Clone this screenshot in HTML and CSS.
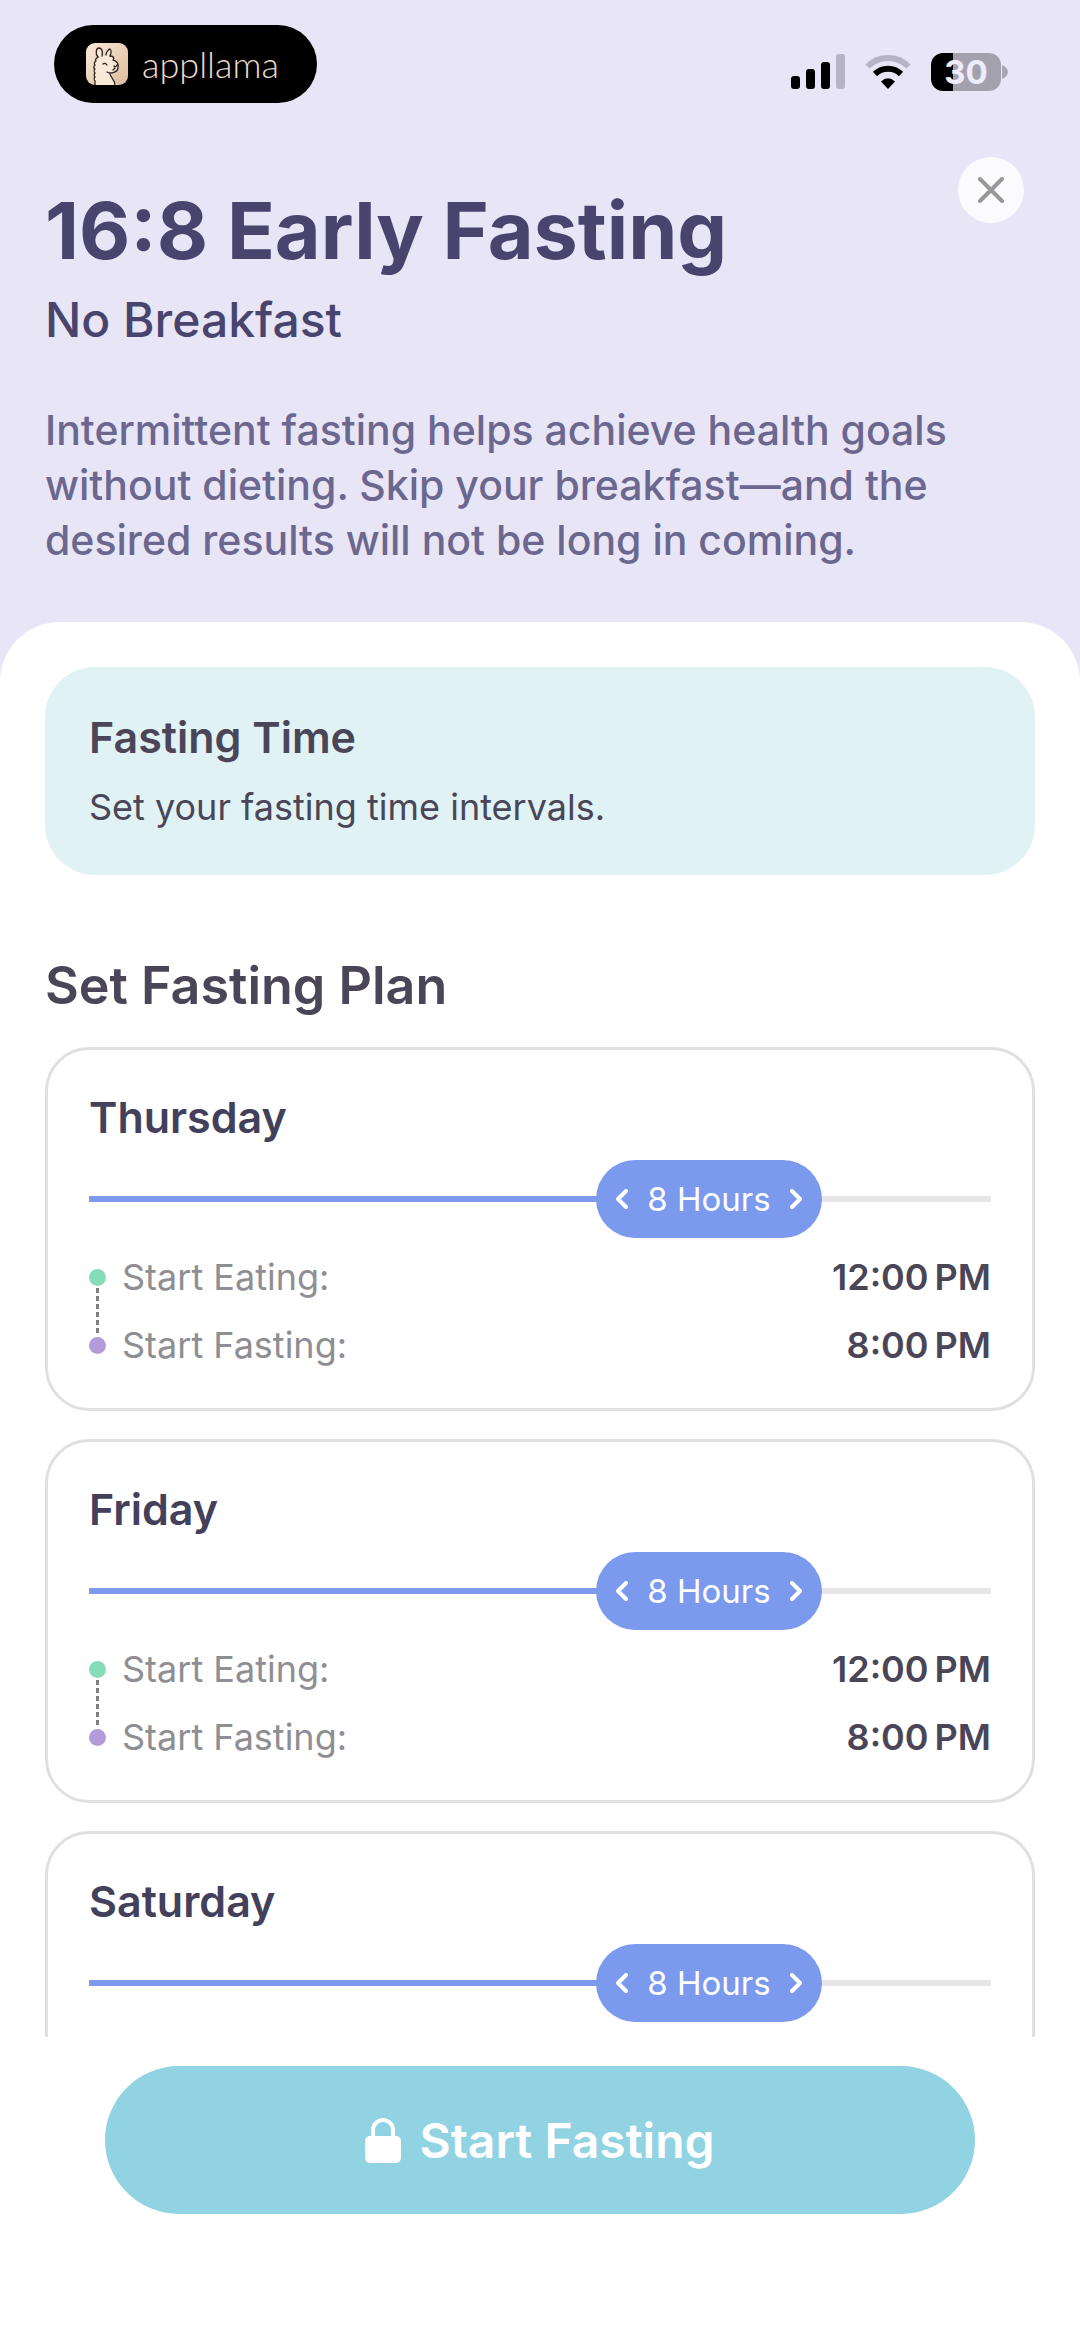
FILE: index.html
```html
<!DOCTYPE html>
<html lang="en">
<head>
    <meta charset="UTF-8">
    <meta name="viewport" content="width=device-width, initial-scale=1.0">
    <title>16:8 Early Fasting</title>
    <link rel="stylesheet" href="styles.css">
</head>
<body>
    <div class="status-bar">
        <div class="brand">
            <svg class="brand-icon" viewBox="0 0 42 42" aria-hidden="true">
                <defs>
                    <linearGradient id="brand-bg" x1="0" y1="0" x2="1" y2="1">
                        <stop offset="0" stop-color="#fbe9d8"/>
                        <stop offset="1" stop-color="#dcbb9b"/>
                    </linearGradient>
                </defs>
                <rect width="42" height="42" rx="9" fill="url(#brand-bg)"/>
                <path d="M9 42V22c0-3 2-6 4-8-3-3-3-9 0-9s4 4 3 8l4-1c0-4 3-7 5-6s1 5 0 7c3 0 4 2 3 4 3 1 5 4 4 8s-3 6-7 5l2 5 4 7z" fill="#f9ead8"/>
                <g fill="none" stroke="#2a221c" stroke-width="1.3" stroke-linecap="round" stroke-linejoin="round">
                    <path d="M12 14c-3-3-2-9 1-9s4 4 3 8M20 12c0-3 3-6 4-6 2 1 1 5 0 7"/>
                    <path d="M12 14c-2 1-3 3-2 4-2 1-2 3-1 4-1 1-2 3 0 4-1 1-1 3 0 4-1 1-1 3 0 4-1 1-1 3 0 4v4"/>
                    <path d="M24 13c3 0 5 2 3 4 4 1 6 4 5 8-1 5-8 6-11 4M28 23c1 1 2 1 3-1M29 25l-2 2M17 21c1-1 3-1 4 1"/>
                    <path d="M24 31c1 4 5 6 5 11"/>
                </g>
            </svg>
            <span class="brand-name">appllama</span>
        </div>
        <div class="status-icons">
            <svg width="54" height="36" viewBox="0 0 54 36" role="img" aria-label="Signal">
                <rect x="0" y="22" width="9" height="13" rx="3"/>
                <rect x="15" y="15" width="9" height="20" rx="3"/>
                <rect x="30" y="8" width="9" height="27" rx="3"/>
                <rect x="45" y="0" width="9" height="35" rx="3" fill="#b6b4c3"/>
            </svg>
            <svg width="46" height="36" viewBox="0 0 46 36" role="img" aria-label="Wi-Fi">
                <path d="M2.5 12.500a29 29 0 0 1 41 0" fill="none" stroke="#b6b4c3" stroke-width="6"/>
                <path d="M10 20a18.500 18.500 0 0 1 26 0" fill="none" stroke="#000" stroke-width="6"/>
                <path d="M23 35l-7-7.500q7-6.500 14 0z"/>
            </svg>
            <div class="battery">
                <span class="battery-level">30</span>
                <svg width="6" height="14" viewBox="0 0 6 14" aria-hidden="true">
                    <path d="M0 0q6 3 6 7t-6 7z" fill="#aaa7b5"/>
                </svg>
            </div>
        </div>
    </div>

    <header class="plan-header">
        <div class="title-row">
            <h1>16:8 Early Fasting</h1>
            <button class="close-btn" type="button" aria-label="Close">
                <svg width="26" height="26" viewBox="0 0 26 26" aria-hidden="true">
                    <path d="M2 2l22 22M24 2L2 24" stroke="#989898" stroke-width="4" stroke-linecap="round"/>
                </svg>
            </button>
        </div>
        <p class="subtitle">No Breakfast</p>
        <p class="description">Intermittent fasting helps achieve health goals without dieting. Skip your breakfast—and the desired results will not be long in coming.</p>
    </header>

    <main class="panel">
        <section class="info-card">
            <h3>Fasting Time</h3>
            <p>Set your fasting time intervals.</p>
        </section>

        <h2>Set Fasting Plan</h2>

        <div class="day-list">
            <section class="day-card">
                <h3>Thursday</h3>
                <div class="slider">
                    <input type="range" id="hours-thu" min="2" max="10" value="8" aria-label="Thursday eating hours">
                    <label class="slider-label" for="hours-thu">
                        <svg width="12" height="20" viewBox="0 0 12 20" aria-hidden="true"><path d="M10 2L2 10l8 8"/></svg>
                        8 Hours
                        <svg width="12" height="20" viewBox="0 0 12 20" aria-hidden="true"><path d="M2 2l8 8-8 8"/></svg>
                    </label>
                </div>
                <dl class="times">
                    <div class="time-row eating"><dt>Start Eating:</dt><dd>12:00&#8239;PM</dd></div>
                    <div class="time-row fasting"><dt>Start Fasting:</dt><dd>8:00&#8239;PM</dd></div>
                </dl>
            </section>

            <section class="day-card">
                <h3>Friday</h3>
                <div class="slider">
                    <input type="range" id="hours-fri" min="2" max="10" value="8" aria-label="Friday eating hours">
                    <label class="slider-label" for="hours-fri">
                        <svg width="12" height="20" viewBox="0 0 12 20" aria-hidden="true"><path d="M10 2L2 10l8 8"/></svg>
                        8 Hours
                        <svg width="12" height="20" viewBox="0 0 12 20" aria-hidden="true"><path d="M2 2l8 8-8 8"/></svg>
                    </label>
                </div>
                <dl class="times">
                    <div class="time-row eating"><dt>Start Eating:</dt><dd>12:00&#8239;PM</dd></div>
                    <div class="time-row fasting"><dt>Start Fasting:</dt><dd>8:00&#8239;PM</dd></div>
                </dl>
            </section>

            <section class="day-card">
                <h3>Saturday</h3>
                <div class="slider">
                    <input type="range" id="hours-sat" min="2" max="10" value="8" aria-label="Saturday eating hours">
                    <label class="slider-label" for="hours-sat">
                        <svg width="12" height="20" viewBox="0 0 12 20" aria-hidden="true"><path d="M10 2L2 10l8 8"/></svg>
                        8 Hours
                        <svg width="12" height="20" viewBox="0 0 12 20" aria-hidden="true"><path d="M2 2l8 8-8 8"/></svg>
                    </label>
                </div>
            </section>
        </div>
    </main>

    <footer class="action-bar">
        <button class="start-btn" type="button">
            <svg width="36" height="46" viewBox="0 0 36 46" aria-hidden="true">
                <path d="M8 22V13a10 10 0 0 1 20 0v9" fill="none" stroke="#fff" stroke-width="4"/>
                <rect x="0" y="19" width="36" height="27" rx="5" fill="#fff"/>
            </svg>
            Start Fasting
        </button>
    </footer>
</body>
</html>
```

FILE: styles.css
```css
* {
    margin: 0;
    padding: 0;
    box-sizing: border-box;
}

body {
    font-family: Inter, "Liberation Sans", sans-serif;
    background: #e8e6f6;
    color: #4a4658;
    height: 100vh;
    display: flex;
    flex-direction: column;
}

button {
    font: inherit;
    border: none;
    cursor: pointer;
}

/* Status bar */
.status-bar {
    display: flex;
    justify-content: space-between;
    align-items: flex-start;
    padding: 25px 72px 0 54px;
}

.brand {
    display: flex;
    align-items: center;
    gap: 14px;
    height: 78px;
    padding: 0 38px 0 32px;
    border-radius: 39px;
    background: #000;
}

.brand-icon {
    width: 42px;
    height: 42px;
}

.brand-name {
    font-family: Lato, sans-serif;
    font-size: 36px;
    font-weight: 300;
    line-height: 40px;
    color: #ecd9c8;
}

.status-icons {
    display: flex;
    align-items: center;
    gap: 20px;
    padding-top: 28px;
}

.battery {
    display: flex;
    align-items: center;
    gap: 1px;
}

.battery-level {
    width: 70px;
    height: 38px;
    border-radius: 12px;
    background: linear-gradient(90deg, #000 31%, #a4a1af 31%);
    color: #eeecfa;
    font-size: 33px;
    font-weight: 700;
    line-height: 38px;
    text-align: center;
}

/* Header */
.plan-header {
    padding: 54px 45px;
    color: #49446d;
}

.title-row {
    display: flex;
    justify-content: space-between;
    align-items: flex-start;
    padding-right: 11px;
}

h1 {
    padding-top: 25px;
    font-size: 79px;
    font-weight: 700;
    line-height: 96px;
}

.close-btn {
    display: flex;
    justify-content: center;
    align-items: center;
    flex: none;
    width: 66px;
    height: 66px;
    border-radius: 50%;
    background: #fbfafe;
}

.subtitle {
    margin-top: 13px;
    font-size: 48px;
    font-weight: 500;
    line-height: 58px;
}

.description {
    max-width: 940px;
    margin-top: 54px;
    font-size: 41px;
    font-weight: 500;
    line-height: 55px;
    color: #6b678e;
}

/* White sheet, scrolls under the action bar */
.panel {
    flex: 1;
    min-height: 0;
    overflow-y: auto;
    scrollbar-width: none;
    padding: 45px 45px 0;
    border-radius: 60px 60px 0 0;
    background: #fff;
}

.info-card {
    padding: 44px;
    border-radius: 50px;
    background: #e0f2f4;
}

.info-card p {
    margin-top: 20px;
    font-size: 36px;
    line-height: 48px;
}

h2 {
    margin: 79px 0 29px;
    font-size: 52px;
    font-weight: 600;
    line-height: 64px;
}

h3 {
    font-size: 43px;
    font-weight: 600;
    line-height: 52px;
}

.day-list {
    display: grid;
    grid-auto-rows: 1fr;
    gap: 28px;
}

.day-card {
    padding: 41px;
    border: 3px solid #dfe1e1;
    border-radius: 44px;
}

.day-card h3 {
    color: #42405a;
}

.slider {
    position: relative;
    height: 78px;
    margin: 17px 0;
}

.slider input {
    display: block;
    width: 100%;
    height: 78px;
    appearance: none;
    background: linear-gradient(90deg, #7c9bee 75%, #e6e6e6 75%) center / 100% 6px no-repeat;
}

.slider input::-webkit-slider-thumb {
    appearance: none;
    width: 226px;
    height: 78px;
    border-radius: 39px;
    background: #7b9aee;
}

/* Sits on the thumb */
.slider-label {
    position: absolute;
    top: 0;
    left: calc((100% - 226px) * 0.75);
    display: flex;
    justify-content: space-between;
    align-items: center;
    width: 226px;
    height: 78px;
    padding: 0 20px;
    color: #fff;
    font-size: 33px;
    pointer-events: none;
}

.slider-label path {
    fill: none;
    stroke: #fff;
    stroke-width: 4;
    stroke-linecap: round;
    stroke-linejoin: round;
}

.times {
    display: grid;
    gap: 24px;
    font-size: 36px;
    line-height: 44px;
}

.time-row {
    position: relative;
    display: flex;
    align-items: center;
}

.time-row::before {
    content: "";
    width: 17px;
    height: 17px;
    margin-right: 16px;
    border-radius: 50%;
}

.eating::before {
    background: #86dbb9;
}

.fasting::before {
    background: #b49bd9;
}

/* Dashed connector between the two dots */
.eating::after {
    content: "";
    position: absolute;
    top: 33px;
    left: 7px;
    width: 3px;
    height: 46px;
    background: repeating-linear-gradient(#808084 0 5px, transparent 5px 8px);
}

dt {
    color: #8e8e93;
}

dd {
    margin-left: auto;
    font-weight: 600;
}

/* Bottom action */
.action-bar {
    padding: 29px 105px 123px;
    background: #fff;
}

.start-btn {
    display: flex;
    justify-content: center;
    align-items: center;
    gap: 18px;
    width: 100%;
    height: 148px;
    border-radius: 74px;
    background: #91d3e3;
    color: #fff;
    font-size: 48px;
    font-weight: 600;
}
```
